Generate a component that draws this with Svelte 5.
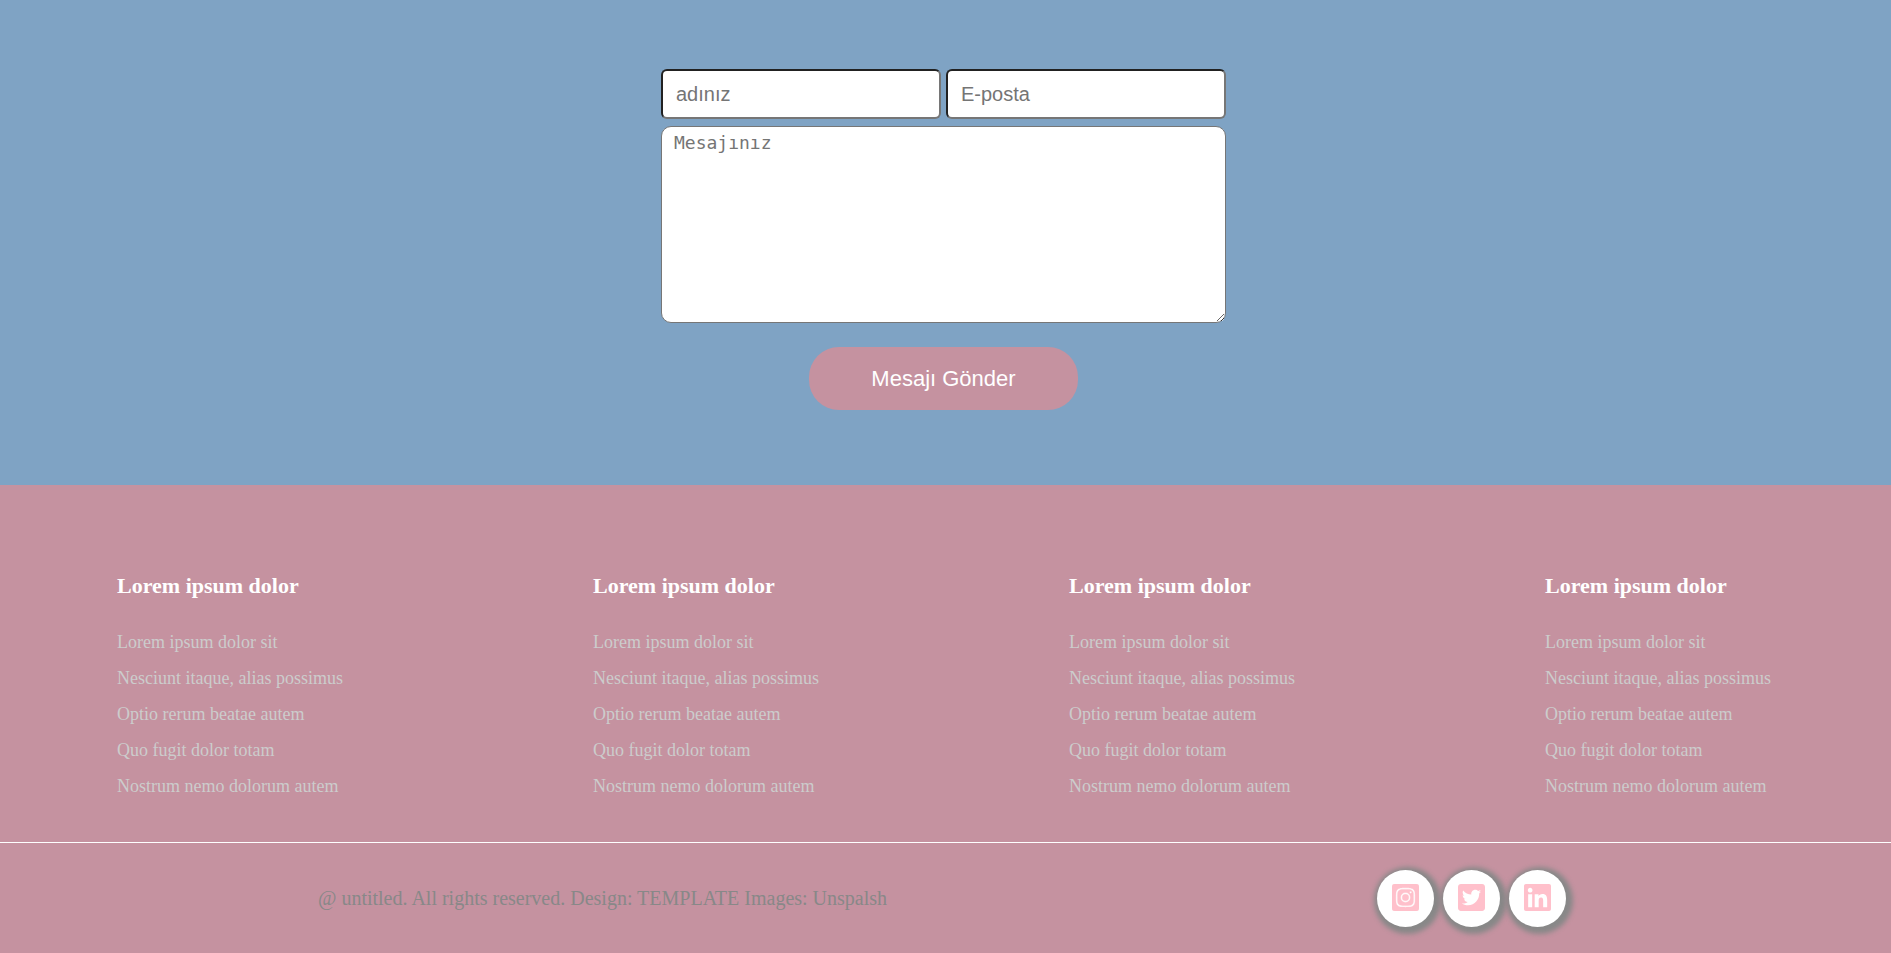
<script lang="ts">
  const links = [
    'Lorem ipsum dolor sit',
    'Nesciunt itaque, alias possimus',
    'Optio rerum beatae autem',
    'Quo fugit dolor totam',
    'Nostrum nemo dolorum autem',
  ];
  const columns = [1, 2, 3, 4].map((id) => ({ id, title: 'Lorem ipsum dolor', links }));

  const socials = [
    {
      name: 'Instagram',
      stroke: 7,
      path: 'M224 202.66A53.34 53.34 0 1 0 277.36 256 53.38 53.38 0 0 0 224 202.66zm124.71-41a54 54 0 0 0-30.41-30.41c-21-8.29-71-6.43-94.3-6.43s-73.25-1.93-94.31 6.43a54 54 0 0 0-30.41 30.41c-8.28 21-6.43 71.05-6.43 94.33s-1.85 73.27 6.47 94.34a54 54 0 0 0 30.41 30.41c21 8.29 71 6.43 94.31 6.43s73.24 1.93 94.3-6.43a54 54 0 0 0 30.41-30.41c8.35-21 6.43-71.05 6.43-94.33s1.92-73.26-6.43-94.33zM224 338a82 82 0 1 1 82-82 81.9 81.9 0 0 1-82 82zm85.38-148.3a19.14 19.14 0 1 1 19.13-19.14 19.1 19.1 0 0 1-19.09 19.18zM400 32H48A48 48 0 0 0 0 80v352a48 48 0 0 0 48 48h352a48 48 0 0 0 48-48V80a48 48 0 0 0-48-48zm-17.12 290c-1.29 25.63-7.14 48.34-25.85 67s-41.4 24.63-67 25.85c-26.41 1.49-105.59 1.49-132 0-25.63-1.29-48.26-7.15-67-25.85s-24.63-41.42-25.85-67c-1.49-26.42-1.49-105.61 0-132 1.29-25.63 7.07-48.34 25.85-67s41.47-24.56 67-25.78c26.41-1.49 105.59-1.49 132 0 25.63 1.29 48.33 7.15 67 25.85s24.63 41.42 25.85 67.05c1.49 26.32 1.49 105.44 0 131.88z',
    },
    {
      name: 'Twitter',
      stroke: 0,
      path: 'M400 32H48C21.5 32 0 53.5 0 80v352c0 26.500 21.5 48 48 48h352c26.5 0 48-21.5 48-48V80c0-26.500-21.500-48-48-48zm-48.900 158.800c.2 2.800.2 5.700.2 8.500 0 86.700-66 186.600-186.600 186.600-37.200 0-71.700-10.800-100.700-29.400 5.300.6 10.400.8 15.800.8 30.700 0 58.900-10.400 81.400-28-28.800-.6-53-19.500-61.300-45.500 10.100 1.500 19.200 1.500 29.600-1.200-30-6.100-52.500-32.500-52.500-64.400v-.8c8.700 4.900 18.900 7.900 29.600 8.300a65.447 65.447 0 0 1-29.200-54.600c0-12.200 3.200-23.400 8.900-33.100 32.300 39.800 80.800 65.800 135.200 68.600-9.300-44.500 24-80.600 64-80.600 18.900 0 35.900 7.900 47.900 20.700 14.800-2.800 29-8.300 41.600-15.800-4.900 15.200-15.200 28-28.800 36.100 13.200-1.400 26-5.100 37.800-10.200-8.900 13.100-20.100 24.700-32.900 34z',
    },
    {
      name: 'LinkedIn',
      stroke: 0,
      path: 'M416 32H31.900C14.300 32 0 46.500 0 64.300v383.400C0 465.500 14.300 480 31.900 480H416c17.600 0 32-14.500 32-32.300V64.300c0-17.800-14.400-32.300-32-32.300zM135.400 416H69V202.200h66.500V416zm-33.200-243c-21.300 0-38.500-17.300-38.500-38.500S80.900 96 102.200 96c21.200 0 38.500 17.300 38.500 38.500 0 21.300-17.200 38.500-38.500 38.500zm282.100 243h-66.400V312c0-24.800-.5-56.700-34.500-56.700-34.600 0-39.900 27-39.900 54.900V416h-66.400V202.200h63.700v29.200h.9c8.900-16.800 30.600-34.500 62.900-34.500 67.200 0 79.700 44.300 79.700 101.900V416z',
    },
  ];
</script>

<main class="contact">
  <form class="form" onsubmit={(e) => e.preventDefault()}>
    <div class="row">
      <input type="text" name="name" placeholder="adınız" aria-label="adınız" />
      <input type="email" name="email" placeholder="E-posta" aria-label="E-posta" />
    </div>
    <textarea name="message" placeholder="Mesajınız" aria-label="Mesajınız"></textarea>
    <button type="submit">Mesajı Gönder</button>
  </form>
</main>

<footer>
  <div class="columns">
    {#each columns as column (column.id)}
      <section>
        <h3>{column.title}</h3>
        <ul>
          {#each column.links as link}
            <li><a href="#top">{link}</a></li>
          {/each}
        </ul>
      </section>
    {/each}
  </div>
  <div class="bottom">
    <p>@ untitled. All rights reserved. Design: TEMPLATE Images: Unspalsh</p>
    <div class="socials">
      {#each socials as social}
        <a href="#top" aria-label={social.name}>
          <svg viewBox="0 32 448 448" aria-hidden="true">
            <path d={social.path} stroke-width={social.stroke} />
          </svg>
        </a>
      {/each}
    </div>
  </div>
</footer>

<style>
  :global(body) {
    margin: 0;
    background: #c592a0;
    font-family: 'Liberation Serif', 'Times New Roman', serif;
  }

  .contact {
    display: flex;
    justify-content: center;
    padding: 69px 20px 75px 16px;
    background: #7fa3c4;
  }

  .form {
    display: flex;
    flex-direction: column;
    align-items: center;
    width: 100%;
    max-width: 565px;
  }

  .row {
    display: flex;
    gap: 5px;
    width: 100%;
  }

  input,
  textarea,
  button {
    box-sizing: border-box;
    font-family: 'Liberation Sans', Arial, sans-serif;
    font-size: 20px;
  }

  input {
    flex: 1;
    min-width: 0;
    height: 50px;
    padding: 0 13px;
    border: 2px inset #767676;
    border-radius: 6px;
    background: #fff;
  }

  input::placeholder,
  textarea::placeholder {
    color: #757575;
  }

  textarea {
    width: 100%;
    height: 197px;
    margin-top: 7px;
    padding: 5px 12px;
    border: 1px solid #767676;
    border-radius: 10px;
    background: #fff;
    font-family: 'DejaVu Sans Mono', monospace;
    font-size: 18px;
  }

  button {
    margin-top: 24px;
    padding: 19px 62px;
    border: 0;
    border-radius: 30px;
    background: #c592a0;
    color: #fff;
    font-size: 22px;
    line-height: 25px;
    cursor: pointer;
  }

  .columns {
    display: flex;
    justify-content: space-between;
    padding: 88px 120px 38px 117px;
    border-bottom: 1px solid #fff;
  }

  h3 {
    margin: 0 0 26px;
    color: #fff;
    font-size: 22px;
    line-height: 25px;
  }

  ul {
    margin: 0;
    padding: 0;
    list-style: none;
  }

  li {
    font-size: 18px;
    line-height: 36px;
  }

  li a {
    color: #ccc;
    text-decoration: none;
  }

  .bottom {
    display: flex;
    align-items: center;
    justify-content: space-around;
    padding: 27px 80px 26px 73px;
  }

  p {
    margin: 0;
    color: #888;
    font-size: 20px;
    line-height: 23px;
  }

  .socials {
    display: flex;
    gap: 9px;
  }

  .socials a {
    display: grid;
    place-items: center;
    box-sizing: border-box;
    width: 57px;
    height: 57px;
    padding-bottom: 2px;
    border-radius: 50%;
    background: #fff;
    box-shadow: 2px 2px 5px 5px #888;
  }

  svg {
    width: 27px;
    height: 27px;
    fill: #ffc0cb;
    stroke: #ffc0cb;
  }
</style>
